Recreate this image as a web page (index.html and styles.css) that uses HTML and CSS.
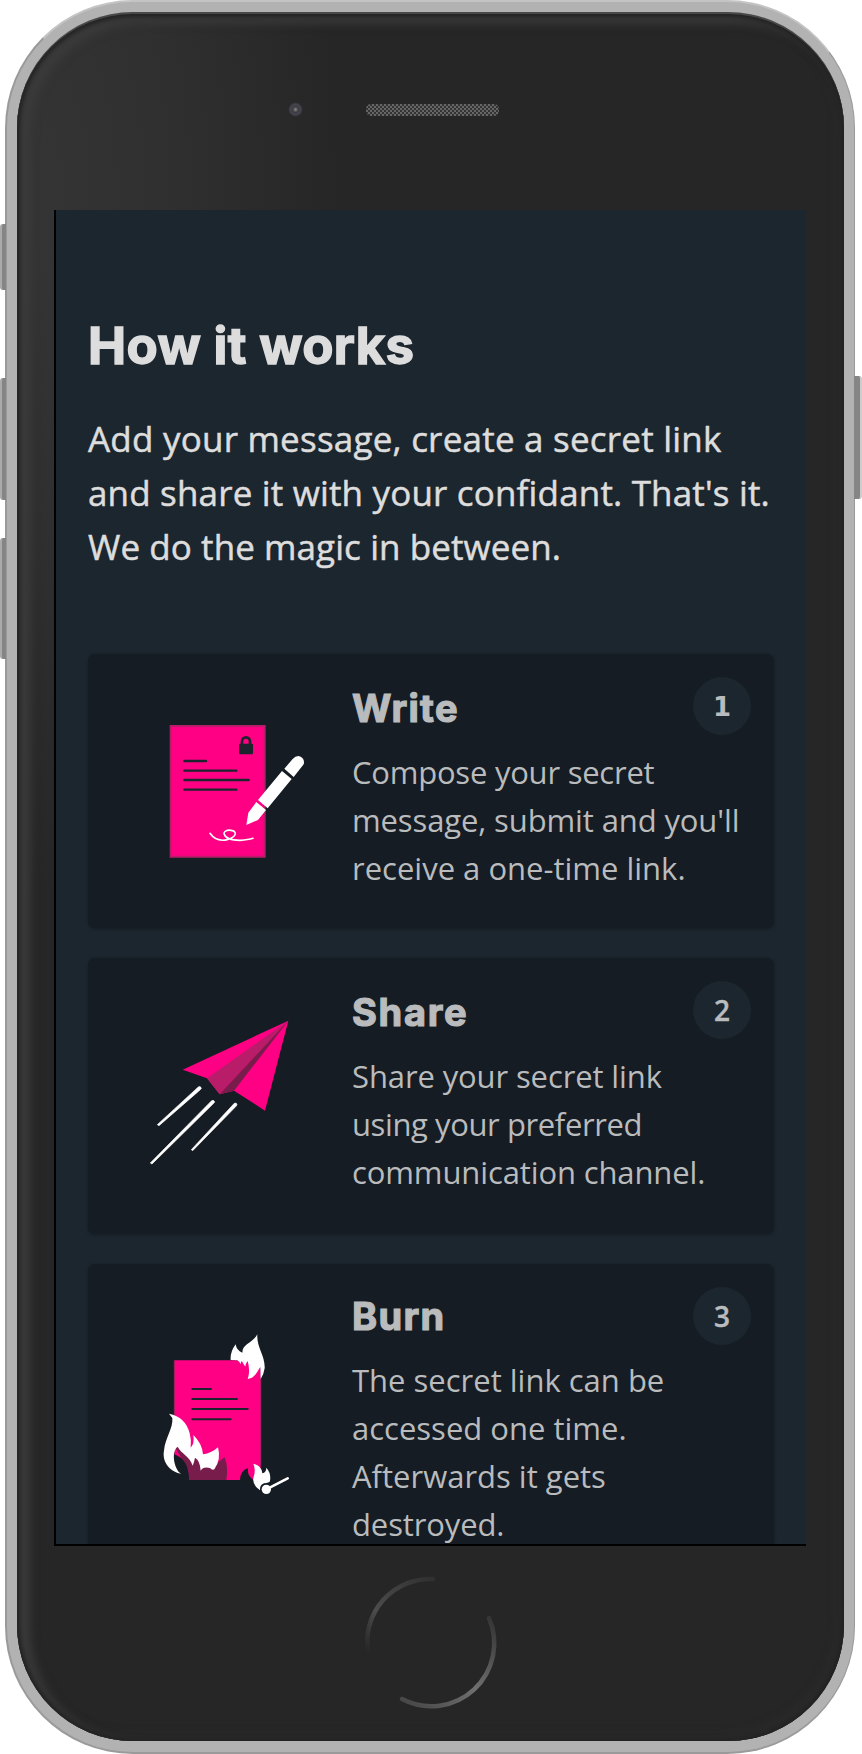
FILE: index.html
```html
<!DOCTYPE html>
<html lang="en">
<head>
<meta charset="utf-8">
<title>How it works</title>
<link rel="stylesheet" href="styles.css">
</head>
<body>
<div class="stage">
  <i class="key key-mute"></i><i class="key key-up"></i><i class="key key-down"></i><i class="key key-power"></i>
  <div class="phone">
    <div class="bezel">
      <div class="top"><i class="camera"></i><i class="speaker"></i></div>
      <main class="screen">
        <h1 class="title">How it works</h1>
        <p class="intro">
          <span class="wider">Add your message, create a secret link</span>
          <span class="wide">and share it with your confidant. That's it.</span>
          <span class="loose">We do the magic in between.</span>
        </p>
        <section class="card">
          <svg class="art" viewBox="88 654 264 240"><g transform="translate(140 700) scale(.33333)">
            <path fill="#ff0084" stroke="#b91c68" stroke-width="6" d="M92 78H374V470H92z"/>
            <path stroke="#1c252e" stroke-width="7" stroke-linecap="round" d="M133 183H198M133 212H289M133 240H326M133 269H289"/>
            <path fill="none" stroke="#1c252e" stroke-width="8" d="M306 135V124A12 12 0 0 1 330 124V135"/>
            <rect x="297" y="131" width="42" height="32" rx="4" fill="#1c252e"/>
            <path fill="none" stroke="#fff" stroke-width="5" stroke-linecap="round" d="M210 400C226 423 247 423 264 418C287 411 293 397 277 392C259 387 249 397 253 403C257 417 275 421 300 421Q325 420 339 415"/>
            <path fill="#fff" d="M433 206L458 177Q466 168 475 168Q493 171 492 190Q491 195 484 202L461 231zM426 213L455 237L383 325L354 300zM349 306L378 330L354 360L319 375L325 338z"/>
          </g></svg>
          <div class="text"><h2>Write</h2>
            <p><span class="tighter">Compose your secret</span><span class="tight">message, submit and you'll</span><span>receive a one-time link.</span></p></div>
          <b class="badge badge-one">1</b>
        </section>
        <section class="card card-tall">
          <svg class="art" viewBox="88 958 264 240"><g transform="translate(140 1000) scale(.33333)">
            <path fill="#ff0084" d="M445 62L128 209L201 235L239 283L282 272L375 332z"/>
            <path fill="#b91c68" d="M445 62L201 235L239 283z"/>
            <path fill="#781d4b" d="M445 62L239 283L282 272z"/>
            <path fill="#fff" stroke="#fff" stroke-width="2" d="M175 261Q182 257 184 265L181 269L57 377L52 374zM215 302Q222 299 224 306L221 310L36 492L31 489zM283 310Q290 307 291 314L288 319L158 452L154 449z"/>
          </g></svg>
          <div class="text"><h2 class="spread">Share</h2>
            <p><span class="tight">Share your secret link</span><span class="tightest">using your preferred</span><span class="tight">communication channel.</span></p></div>
          <b class="badge">2</b>
        </section>
        <section class="card card-last">
          <svg class="art" viewBox="88 1264 264 240"><g transform="translate(140 1310) scale(.33333)">
            <path fill="#ff0084" d="M104 151H362V510H104z"/>
            <path fill="none" stroke="#b91c68" stroke-width="3" d="M103 151V430M362 190V465"/>
            <path stroke="#1c252e" stroke-width="6" stroke-linecap="round" d="M157 237H213M157 267H291M157 297H323M157 328H272"/>
            <path fill="#781d4b" d="M104 410L160 430L215 470L254 442Q266 475 259 510H145V480z"/>
            <path fill="#151c23" d="M102 433Q148 448 147 511H101zM300 511Q300 482 324 474Q320 497 342 511z"/>
            <path fill="#fff" d="M87 311Q137 321 149 370Q155 391 152 413Q164 401 160 375Q187 401 189 433Q214 430 234 412Q244 449 223 478Q216 481 210 474Q190 468 182 482Q180 451 165 443Q163 455 158 467C148 437 124 432 113 410C92 425 103 479 123 491C85 484 66 451 72 422C75 384 100 355 97 324z"/>
            <path fill="#fff" d="M272 150Q270 126 287 103Q289 121 307 128C307 100 338 100 352 73C349 111 376 138 374 175Q371 195 362 207L361 171C351 184 346 205 323 207C329 191 328 172 323 153Q317 160 316 170Q311 164 306 154Q303 153 302 162Q298 154 292 151z"/>
            <path fill="#fff" d="M340 461Q365 467 367 490Q379 487 379 473Q394 490 390 513Q388 519 372 520Q359 525 360 541Q334 523 341 500Q348 480 340 461z"/>
            <path stroke="#fff" stroke-width="8" stroke-linecap="round" d="M379 538L443 505"/><circle cx="379" cy="538" r="14" fill="#fff"/>
          </g></svg>
          <div class="text"><h2>Burn</h2>
            <p><span>The secret link can be</span><span>accessed one time.</span><span>Afterwards it gets</span><span class="tight">destroyed.</span></p></div>
          <b class="badge">3</b>
        </section>
      </main>
      <svg class="home" viewBox="0 0 140 140"><defs>
        <linearGradient id="a" x1="0" y1="1" x2="1" y2="0"><stop offset="0" stop-color="#262626"/><stop offset=".35" stop-color="#4c4c4c"/><stop offset="1" stop-color="#303030"/></linearGradient>
        <linearGradient id="b" x1="1" y1="0" x2="0" y2="1"><stop offset="0" stop-color="#333"/><stop offset=".5" stop-color="#707070"/><stop offset="1" stop-color="#444"/></linearGradient></defs>
        <path fill="none" stroke="url(#a)" stroke-width="4.5" stroke-linecap="round" d="M8 80A63 63 0 0 1 73 7"/>
        <path fill="none" stroke="url(#b)" stroke-width="4.5" stroke-linecap="round" d="M129 46A63 63 0 0 1 42 127"/>
      </svg>
    </div>
  </div>
</div>
</body>
</html>
```
FILE: styles.css
```css
* { box-sizing: border-box; margin: 0; padding: 0; }
body { background: #fff; width: 862px; height: 1754px; overflow: hidden; }
.stage { position: relative; height: 1754px; padding: 0 7px 0 5px; }
.phone { height: 1754px; padding: 10px 10px 11px; border-radius: 128px; background: #b2b2b2; border: 2px solid #9a9a9a; border-top-color: #c4c4c4; border-right-width: 1px; }
.bezel { display: flex; flex-direction: column; align-items: flex-start; height: 100%; border-radius: 116px; overflow: hidden;
  background: radial-gradient(ellipse 320px 700px at 0 180px, #353535 0, #2f2f2f 50%, #262626 100%);
  box-shadow: inset 0 0 4px 3px #222, inset 10px 6px 10px 3px #3b3b3b, inset -6px -6px 10px #2c2c2c; border-top: 2px solid #484848; }
.top { position: relative; height: 196px; width: 100%; flex: none; }
.camera { position: absolute; left: 271px; top: 88px; width: 15px; height: 15px; border-radius: 50%; background: radial-gradient(circle, #888 0, #3a3a40 3px, #47464d 5px, #202024 8px); }
.speaker { position: absolute; left: 349px; top: 90px; width: 133px; height: 12px; border-radius: 5px; background: repeating-conic-gradient(#666 0 25%, #333 0 50%) 0 0 / 4px 4px; }
.screen { width: 752px; height: 1336px; flex: none; margin-left: 37px; padding: 106px 32px 0; overflow: hidden; background: #1c262e; border-left: 2px solid #000; border-bottom: 2px solid #000; }
.title { font: 700 51px/60px Inter, sans-serif; letter-spacing: .35px; color: #ddd; -webkit-text-stroke: 1.4px #ddd; white-space: nowrap; }
.intro span, .text span { display: block; white-space: nowrap; }
.intro { margin: 36px 0 80px; font: 500 35px/54px "Open Sans", sans-serif; color: #ddd; -webkit-text-stroke: .5px #ddd; }
.card { position: relative; display: grid; grid-template-columns: 264px 1fr; align-items: start; min-height: 274px; margin-bottom: 30px; border-radius: 7px; background: #151c23; box-shadow: 0 1px 3px #151c23; width: 686px; }
.card-tall { min-height: 276px; }
.art { width: 264px; height: 240px; }
.text { padding-top: 32px; color: #b9bbbd; }
.card-last .text { padding-top: 30px; }
.text h2 { font: 700 38px/44px Inter, sans-serif; letter-spacing: 1.3px; margin-bottom: 18px; -webkit-text-stroke: 1.2px #b9bbbd; }
.text h2.spread { letter-spacing: 1.7px; }
.text p { font: 400 31px/48px "Open Sans", sans-serif; }
.wider { letter-spacing: .22px; }
.wide { letter-spacing: .17px; }
.loose { letter-spacing: .08px; }
.tight { letter-spacing: -.12px; }
.tighter { letter-spacing: -.23px; }
.tightest { letter-spacing: -.4px; }
.badge { position: absolute; right: 23px; top: 23px; width: 58px; height: 58px; border-radius: 50%; background: #1c262e; color: #b9bbbd; text-align: center; font: 600 28px/58px "Open Sans", sans-serif; -webkit-text-stroke: .4px #b9bbbd; }
.badge-one { font: 700 26px/60px "DejaVu Sans", sans-serif; -webkit-text-stroke: 0; }
.home { width: 140px; height: 140px; margin: 26px 0 0 343px; }
.key { position: absolute; left: 0; width: 6px; background: #858585; border-left: 2px solid #aaa; border-radius: 3px 0 0 3px; }
.key-mute { top: 224px; height: 66px; }
.key-up { top: 378px; height: 122px; }
.key-down { top: 538px; height: 121px; }
.key-power { left: 854px; top: 376px; height: 123px; border: 0; border-radius: 0 3px 3px 0; border-right: 2px solid #ccc; width: 8px; }
```
